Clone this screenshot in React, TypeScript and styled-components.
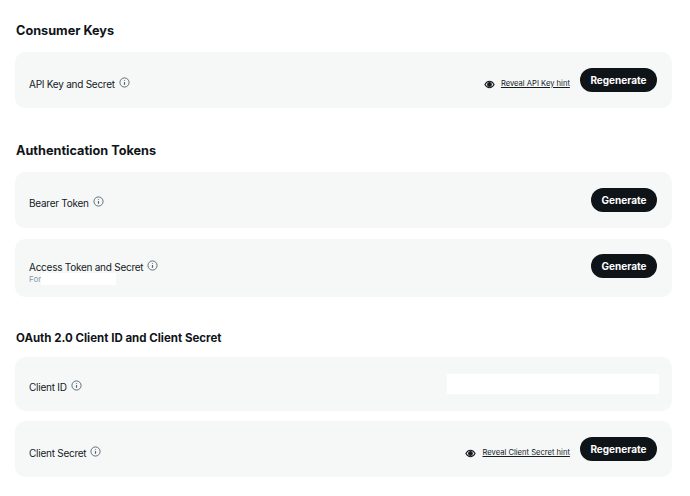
import React from 'react';
import styled, { createGlobalStyle } from 'styled-components';

const GlobalStyle = createGlobalStyle`
  html, body {
    margin: 0;
    padding: 0;
    background: #ffffff;
    font-family: "Inter", "Liberation Sans", sans-serif;
    color: #0f1419;
  }
`;

const Page = styled.main`
  width: 690px;
  height: 496px;
  overflow: hidden;
  box-sizing: border-box;
  padding: 20px 18px 0 15px;
`;

const Section = styled.section<{ $gap: number }>`
  margin-bottom: ${p => p.$gap}px;
`;

const Heading = styled.h2<{ $small?: boolean }>`
  margin: 0 0 ${p => (p.$small ? 10 : 12)}px 1px;
  height: 20px;
  font-size: ${p => (p.$small ? 11.5 : 12.7)}px;
  line-height: 22px;
  font-weight: 700;
  color: #0f1419;
`;

const CardList = styled.div<{ $gap: number }>`
  display: flex;
  flex-direction: column;
  gap: ${p => p.$gap}px;
`;

const Card = styled.div<{ $height: number }>`
  height: ${p => p.$height}px;
  box-sizing: border-box;
  padding: 0 15px 0 14px;
  display: flex;
  align-items: center;
  justify-content: space-between;
  background: #f6f8f8;
  border-radius: 10px;
`;

const LabelBlock = styled.div<{ $pad?: number }>`
  display: flex;
  flex-direction: column;
  padding-top: ${p => p.$pad ?? 7}px;
`;

const LabelRow = styled.div`
  display: flex;
  align-items: center;
  gap: 4px;
`;

const Label = styled.span`
  font-size: 10px;
  line-height: 14px;
  letter-spacing: -0.25px;
  color: #14191e;
`;

const InfoIcon = styled.svg`
  width: 11px;
  height: 11px;
  margin-top: -3px;
  color: #536471;
  flex: none;
`;

const SubRow = styled.div`
  display: flex;
  align-items: center;
  height: 10px;
`;

const SubText = styled.span`
  font-size: 8px;
  line-height: 10px;
  color: #829aab;
`;

const Redacted = styled.span<{ $width: number; $height: number; $bleed?: number }>`
  display: block;
  width: ${p => p.$width}px;
  height: ${p => p.$height}px;
  margin-right: ${p => -(p.$bleed ?? 0)}px;
  background: #ffffff;
`;

const Actions = styled.div`
  display: flex;
  align-items: center;
`;

const EyeIcon = styled.svg`
  width: 11px;
  height: 11px;
  margin-top: 8px;
  margin-right: 6px;
  color: #14191e;
`;

const HintLink = styled.a`
  margin-top: 8px;
  margin-right: 10px;
  font-size: 7.6px;
  line-height: 10px;
  color: #14191e;
  text-decoration: underline;
  cursor: pointer;
`;

const PillButton = styled.button<{ $lift?: number }>`
  height: 24px;
  padding: 0 10.5px;
  margin-bottom: ${p => p.$lift ?? 0}px;
  border: none;
  border-radius: 12px;
  background: #0f1419;
  color: #ffffff;
  font-family: "Inter", "Liberation Sans", sans-serif;
  font-size: 10px;
  font-weight: 700;
  cursor: pointer;
`;

const Info = () => (
  <InfoIcon viewBox="0 0 24 24" fill="none" stroke="currentColor" strokeWidth="2">
    <circle cx="12" cy="12" r="10" />
    <path d="M12 11v6" strokeWidth="2.6" />
    <path d="M12 7v1.500" strokeWidth="2.6" />
  </InfoIcon>
);

const Eye = () => (
  <EyeIcon viewBox="0 0 24 24" fill="none" stroke="currentColor" strokeWidth="2.4">
    <path d="M2 12c2.500-4.500 6-7 10-7s7.500 2.500 10 7c-2.500 4.500-6 7-10 7s-7.500-2.500-10-7z" />
    <circle cx="12" cy="12" r="4" fill="currentColor" />
  </EyeIcon>
);

const App: React.FC = () => (
  <>
    <GlobalStyle />
    <Page>
      <Section $gap={32}>
        <Heading>Consumer Keys</Heading>
        <CardList $gap={10}>
          <Card $height={56}>
            <LabelBlock>
              <LabelRow>
                <Label>API Key and Secret</Label>
                <Info />
              </LabelRow>
            </LabelBlock>
            <Actions>
              <Eye />
              <HintLink>Reveal API Key hint</HintLink>
              <PillButton>Regenerate</PillButton>
            </Actions>
          </Card>
        </CardList>
      </Section>

      <Section $gap={30}>
        <Heading>Authentication Tokens</Heading>
        <CardList $gap={11}>
          <Card $height={56}>
            <LabelBlock $pad={5}>
              <LabelRow>
                <Label>Bearer Token</Label>
                <Info />
              </LabelRow>
            </LabelBlock>
            <Actions>
              <PillButton>Generate</PillButton>
            </Actions>
          </Card>
          <Card $height={58}>
            <LabelBlock>
              <LabelRow>
                <Label>Access Token and Secret</Label>
                <Info />
              </LabelRow>
              <SubRow>
                <SubText>For</SubText>
                <Redacted $width={75} $height={12} />
              </SubRow>
            </LabelBlock>
            <Actions>
              <PillButton $lift={4}>Generate</PillButton>
            </Actions>
          </Card>
        </CardList>
      </Section>

      <Section $gap={0}>
        <Heading $small>OAuth 2.0 Client ID and Client Secret</Heading>
        <CardList $gap={10}>
          <Card $height={54}>
            <LabelBlock $pad={5}>
              <LabelRow>
                <Label>Client ID</Label>
                <Info />
              </LabelRow>
            </LabelBlock>
            <Redacted $width={212} $height={20} $bleed={2} />
          </Card>
          <Card $height={56}>
            <LabelBlock>
              <LabelRow>
                <Label>Client Secret</Label>
                <Info />
              </LabelRow>
            </LabelBlock>
            <Actions>
              <Eye />
              <HintLink>Reveal Client Secret hint</HintLink>
              <PillButton>Regenerate</PillButton>
            </Actions>
          </Card>
        </CardList>
      </Section>
    </Page>
  </>
);

export default App;
